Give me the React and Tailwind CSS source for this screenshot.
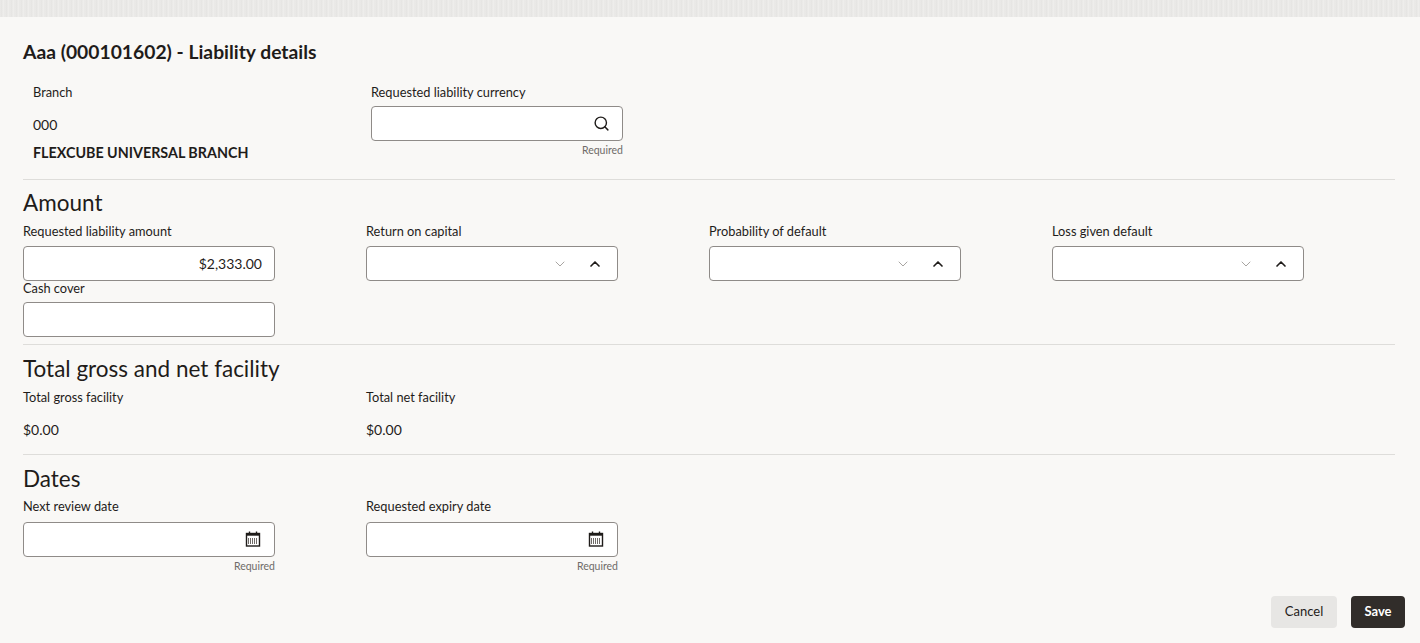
import { Search, ChevronDown, ChevronUp } from 'lucide-react';

const CalendarIcon = () => (
    <svg width="18" height="18" viewBox="0 0 18 18" fill="none">
        <rect x="2.5" y="3.5" width="13" height="12.5" stroke="#1f1c1a" strokeWidth="1.4" />
        <rect x="2.5" y="3.5" width="13" height="2.2" fill="#1f1c1a" />
        <line x1="5.5" y1="1.5" x2="5.5" y2="4.5" stroke="#1f1c1a" strokeWidth="1.4" />
        <line x1="12.5" y1="1.5" x2="12.5" y2="4.5" stroke="#1f1c1a" strokeWidth="1.4" />
        <path d="M4.5 8v6M6.5 8v6M8.5 8v6M10.5 8v6M12.5 8v6" stroke="#6f6b68" strokeWidth="1" />
    </svg>
);

function Label({ children, className = '' }) {
    return <div className={`text-[12.8px] text-[#1f1c1a] leading-none ${className}`}>{children}</div>;
}

function TextBox({ children, className = '' }) {
    return (
        <div className={`w-[252px] h-[35px] bg-white border border-[#8f8b88] rounded-[4px] flex items-center justify-end px-3 ${className}`}>
            {children}
        </div>
    );
}

function SelectBox() {
    return (
        <TextBox className="pr-[14px] gap-[19px]">
            <ChevronDown className="w-4 h-4 text-[#a8a5a2]" strokeWidth={1.5} />
            <ChevronUp className="w-4 h-4 text-[#1f1c1a]" strokeWidth={2.5} />
        </TextBox>
    );
}

function Required() {
    return <div className="w-[252px] text-right text-[10.5px] text-[#6f6b68] mt-[4px] leading-none">Required</div>;
}

function Heading({ children }) {
    return <h2 className="text-[22.5px] leading-none text-[#1f1c1a] mb-[10px]">{children}</h2>;
}

export default function App() {
    return (
        <div className="min-h-[643px] bg-[#f9f8f6] font-['Lato','Noto_Sans',sans-serif] text-[#1f1c1a]">
            <div className="h-[17px] bg-[repeating-linear-gradient(90deg,#ebeae8_0px,#e5e4e2_2px,#f0efed_3px,#e8e7e5_5px)]"></div>

            <div className="pl-[23px] pr-[25px] pt-[25px]">
                <h1 className="text-[19.3px] font-bold leading-none">Aaa (000101602) - Liability details</h1>

                <div className="flex pt-[25px] pb-[19px] border-b border-[#deddda]">
                    <div className="w-[348px] pl-[10px]">
                        <Label>Branch</Label>
                        <div className="text-[14px] mt-[19px] leading-none">000</div>
                        <div className="text-[14.3px] font-bold mt-[14px] leading-none">FLEXCUBE UNIVERSAL BRANCH</div>
                    </div>
                    <div>
                        <Label>Requested liability currency</Label>
                        <TextBox className="mt-[6.5px]">
                            <Search className="w-[17px] h-[17px] text-[#1f1c1a]" strokeWidth={2} />
                        </TextBox>
                        <Required />
                    </div>
                </div>

                <div className="pt-[12px] pb-[7px] border-b border-[#deddda]">
                    <Heading>Amount</Heading>
                    <div className="grid grid-cols-[343px_343px_343px_343px]">
                        <div>
                            <Label>Requested liability amount</Label>
                            <TextBox className="mt-[8.5px]">
                                <span className="text-[14px]">$2,333.00</span>
                            </TextBox>
                        </div>
                        <div>
                            <Label>Return on capital</Label>
                            <div className="mt-[8.5px]"><SelectBox /></div>
                        </div>
                        <div>
                            <Label>Probability of default</Label>
                            <div className="mt-[8.5px]"><SelectBox /></div>
                        </div>
                        <div>
                            <Label>Loss given default</Label>
                            <div className="mt-[8.5px]"><SelectBox /></div>
                        </div>
                    </div>
                    <Label className="mt-[1px]">Cash cover</Label>
                    <TextBox className="mt-[7.5px]" />
                </div>

                <div className="pt-[13px] pb-[17px] border-b border-[#deddda]">
                    <Heading>Total gross and net facility</Heading>
                    <div className="grid grid-cols-[343px_343px]">
                        <div>
                            <Label>Total gross facility</Label>
                            <div className="text-[14px] mt-[19px] leading-none">$0.00</div>
                        </div>
                        <div>
                            <Label>Total net facility</Label>
                            <div className="text-[14px] mt-[19px] leading-none">$0.00</div>
                        </div>
                    </div>
                </div>

                <div className="pt-[13px]">
                    <Heading>Dates</Heading>
                    <div className="grid grid-cols-[343px_343px]">
                        <div>
                            <Label>Next review date</Label>
                            <TextBox className="mt-[8.5px]"><CalendarIcon /></TextBox>
                            <Required />
                        </div>
                        <div>
                            <Label>Requested expiry date</Label>
                            <TextBox className="mt-[8.5px]"><CalendarIcon /></TextBox>
                            <Required />
                        </div>
                    </div>
                </div>

                <div className="flex justify-end gap-[14px] mt-[25px] mr-[-10px]">
                    <button className="h-[32px] w-[66px] rounded-[4px] bg-[#e7e6e4] text-[13px] text-[#1f1c1a]">Cancel</button>
                    <button className="h-[32px] w-[54px] rounded-[4px] bg-[#312d2a] text-[13px] font-bold text-white">Save</button>
                </div>
            </div>
        </div>
    );
}
